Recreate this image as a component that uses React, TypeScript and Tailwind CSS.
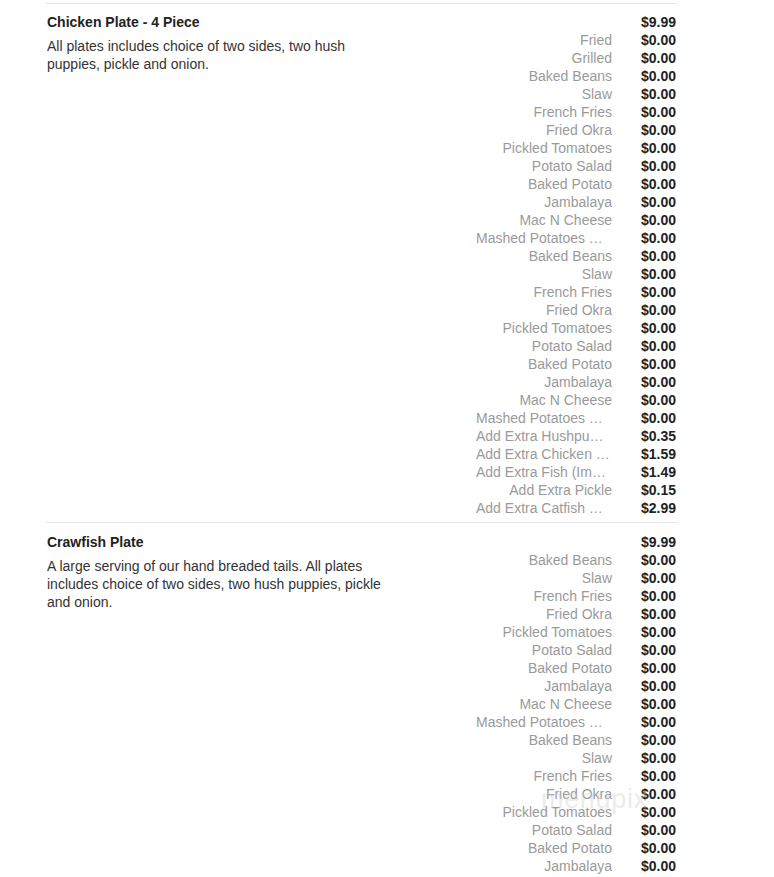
import React from "react";

type Opt = [string, string];

const sides: Opt[] = [
  ["Baked Beans", "$0.00"],
  ["Slaw", "$0.00"],
  ["French Fries", "$0.00"],
  ["Fried Okra", "$0.00"],
  ["Pickled Tomatoes", "$0.00"],
  ["Potato Salad", "$0.00"],
  ["Baked Potato", "$0.00"],
  ["Jambalaya", "$0.00"],
  ["Mac N Cheese", "$0.00"],
  ["Mashed Potatoes …", "$0.00"],
];

const chicken: Opt[] = [
  ["Fried", "$0.00"],
  ["Grilled", "$0.00"],
  ...sides,
  ...sides,
  ["Add Extra Hushpu…", "$0.35"],
  ["Add Extra Chicken …", "$1.59"],
  ["Add Extra Fish (Im…", "$1.49"],
  ["Add Extra Pickle", "$0.15"],
  ["Add Extra Catfish …", "$2.99"],
];

const crawfish: Opt[] = [...sides, ...sides.slice(0, 8)];

function Item({ title, desc, price, opts, top }: { title: string; desc: string; price: string; opts: Opt[]; top: boolean }) {
  return (
    <div className={top ? "border-t border-[#e6e6e6] pt-[9px] pb-[5px] flex" : "border-t border-[#e6e6e6] pt-[10px] pb-[5px] flex"}>
      <div className="w-[390px] shrink-0 pl-px">
        <div className="text-[14px] leading-[18px] font-bold text-[#222]">{title}</div>
        <div className="mt-[6px] w-[345px] text-[14px] leading-[18px] text-[#333]">{desc}</div>
      </div>
      <div className="flex-1 flex flex-col">
        <div className="flex justify-end h-[18px] leading-[18px]">
          <div className="w-[65px] text-right text-[14px] font-bold text-[#222] pr-px">{price}</div>
        </div>
        {opts.map(([n, p], i) => (
          <div key={i} className="flex justify-end h-[18px] leading-[18px]">
            <div
              className={
                n.includes("…")
                  ? "w-[136px] text-left text-[14px] text-[#9a9a9a] whitespace-nowrap"
                  : "w-[136px] text-right text-[14px] text-[#9a9a9a] whitespace-nowrap"
              }
            >
              {n}
            </div>
            <div className="w-[65px] text-right text-[14px] font-bold text-[#222] pr-px">{p}</div>
          </div>
        ))}
      </div>
    </div>
  );
}

export default function App() {
  return (
    <div className="relative w-[774px] h-[877px] overflow-hidden bg-white" style={{ fontFamily: '"Liberation Sans", Arial, sans-serif' }}>
      <div className="ml-[46px] w-[631px] mt-[3px]">
        <Item
          top
          title="Chicken Plate - 4 Piece"
          desc="All plates includes choice of two sides, two hush puppies, pickle and onion."
          price="$9.99"
          opts={chicken}
        />
        <Item
          top={false}
          title="Crawfish Plate"
          desc="A large serving of our hand breaded tails. All plates includes choice of two sides, two hush puppies, pickle and onion."
          price="$9.99"
          opts={crawfish}
        />
      </div>
      <div className="absolute left-[541px] top-[779px] text-[27px] text-[#d0d0d0] opacity-40 tracking-wide pointer-events-none">menupix</div>
    </div>
  );
}
